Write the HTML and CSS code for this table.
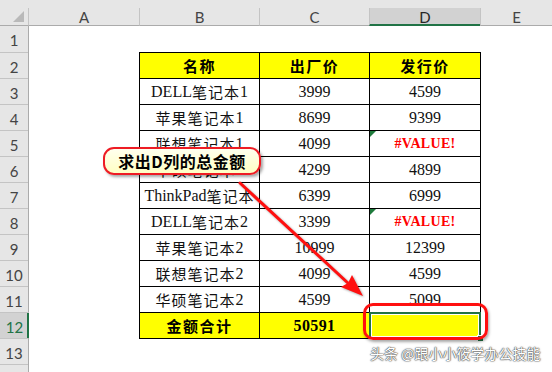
FILE: index.html
```html
<!DOCTYPE html>
<html lang="zh-CN">
<head>
<meta charset="utf-8">
<title>求出D列的总金额</title>
<link rel="stylesheet" href="styles.css">
</head>
<body>
<div class="app">
  <div class="topstrip"></div>
  <div class="colbar">
    <div class="corner"><span class="tri"></span></div>
    <div class="ch w-a">A</div>
    <div class="ch w-b">B</div>
    <div class="ch w-c">C</div>
    <div class="ch w-d sel">D</div>
    <div class="ch w-e">E</div>
  </div>
  <div class="main">
    <div class="rowhdrs">
      <div class="rh">1</div>
      <div class="rh">2</div>
      <div class="rh">3</div>
      <div class="rh">4</div>
      <div class="rh">5</div>
      <div class="rh">6</div>
      <div class="rh">7</div>
      <div class="rh">8</div>
      <div class="rh">9</div>
      <div class="rh">10</div>
      <div class="rh">11</div>
      <div class="rh sel">12</div>
      <div class="rh">13</div>
      <div class="rh"></div>
    </div>
    <div class="cells">
      <div class="tbl">
        <div class="c hd">名称</div>
        <div class="c hd">出厂价</div>
        <div class="c hd">发行价</div>

        <div class="c">DELL<span class="zh">笔记本</span>1</div>
        <div class="c">3999</div>
        <div class="c">4599</div>

        <div class="c"><span class="zh">苹果笔记本</span>1</div>
        <div class="c">8699</div>
        <div class="c">9399</div>

        <div class="c"><span class="zh">联想笔记本</span>1</div>
        <div class="c">4099</div>
        <div class="c err">#VALUE!</div>

        <div class="c"><span class="zh">华硕笔记本</span>1</div>
        <div class="c">4299</div>
        <div class="c">4899</div>

        <div class="c">ThinkPad<span class="zh">笔记本</span></div>
        <div class="c">6399</div>
        <div class="c">6999</div>

        <div class="c">DELL<span class="zh">笔记本</span>2</div>
        <div class="c">3399</div>
        <div class="c err">#VALUE!</div>

        <div class="c"><span class="zh">苹果笔记本</span>2</div>
        <div class="c">10999</div>
        <div class="c">12399</div>

        <div class="c"><span class="zh">联想笔记本</span>2</div>
        <div class="c">4099</div>
        <div class="c">4599</div>

        <div class="c"><span class="zh">华硕笔记本</span>2</div>
        <div class="c">4599</div>
        <div class="c">5099</div>

        <div class="c hd">金额合计</div>
        <div class="c hd num">50591</div>
        <div class="c hd active"><span class="handle"></span></div>
      </div>
    </div>
  </div>

  <div class="callout">求出D列的总金额</div>
  <svg class="arrow" width="552" height="372" viewBox="0 0 552 372">
    <line x1="240" y1="183" x2="349" y2="284" stroke="#ff1010" stroke-width="3" stroke-linecap="round"/>
    <polygon points="363,296 341,287 348,283 352,275" fill="#ff1010"/>
  </svg>
  <div class="ring"></div>
  <div class="watermark">头条 @跟小小筱学办公技能</div>
</div>
</body>
</html>
```
FILE: styles.css
```css
html, body {
  margin: 0;
  padding: 0;
  background: #fff;
}

.app {
  position: relative;
  width: 552px;
  height: 372px;
  overflow: hidden;
  display: flex;
  flex-direction: column;
  font-family: "Lato", "Liberation Sans", sans-serif;
}

.topstrip {
  height: 8px;
  background: #e6e6e6;
  flex: none;
}

.colbar {
  display: flex;
  height: 18px;
  flex: none;
  background: #e6e6e6;
}

.corner {
  width: 28px;
  flex: none;
  position: relative;
  border-bottom: 1px solid #ababab;
  box-sizing: border-box;
}

.tri {
  position: absolute;
  right: 4px;
  bottom: 3px;
  width: 0;
  height: 0;
  border-left: 11px solid transparent;
  border-bottom: 11px solid #b9b9b9;
}

.ch {
  box-sizing: border-box;
  border-left: 1px solid #c4c4c4;
  border-bottom: 1px solid #ababab;
  display: flex;
  align-items: center;
  justify-content: center;
  font-size: 15px;
  color: #444;
  flex: none;
}

.w-a { width: 111px; }
.w-b { width: 120px; }
.w-c { width: 110px; }
.w-d { width: 111px; }
.w-e { flex: 1; }

.ch.sel {
  background: #d2d2d2;
  border-bottom: 2px solid #217346;
  color: #262626;
  padding-top: 1px;
}

.main {
  flex: 1;
  display: flex;
}

.rowhdrs {
  width: 29px;
  flex: none;
  box-sizing: border-box;
  background: #e6e6e6;
  border-right: 1px solid #ababab;
  display: flex;
  flex-direction: column;
}

.rh {
  height: 26px;
  flex: none;
  box-sizing: border-box;
  display: flex;
  align-items: center;
  justify-content: center;
  font-size: 15px;
  color: #444;
  padding-top: 2px;
}

.rh + .rh {
  border-top: 1px solid #c4c4c4;
}

.rh.sel {
  background: #d2d2d2;
  color: #217346;
  box-shadow: inset -2px 0 0 #217346;
  margin-right: -1px;
}

.cells {
  flex: 1;
  background: #fff;
  padding: 26px 0 0 110px;
}

.tbl {
  display: grid;
  grid-template-columns: 119px 109px 110px;
  grid-template-rows: repeat(11, 25px);
  gap: 1px;
  padding: 1px;
  background: #000;
  width: max-content;
}

.c {
  position: relative;
  background: #fff;
  display: flex;
  align-items: center;
  justify-content: center;
  font-family: "Liberation Serif", "Noto Sans CJK SC", serif;
  font-size: 16px;
  color: #111;
  white-space: nowrap;
}

.zh {
  font-family: "Noto Sans CJK SC", sans-serif;
  font-size: 15px;
  letter-spacing: 1px;
  font-weight: 400;
}

.c.hd {
  background: #ffff00;
  font-family: "Noto Sans CJK SC", sans-serif;
  font-weight: 700;
  font-size: 15px;
  letter-spacing: 1.5px;
  color: #000;
}

.c.hd.num {
  font-family: "Liberation Serif", serif;
  font-size: 16px;
  letter-spacing: 0.4px;
}

.c.err {
  color: #ff0000;
  font-weight: 700;
  font-size: 14px;
  letter-spacing: 0.3px;
}

.c.err::before {
  content: "";
  position: absolute;
  left: 0;
  top: 0;
  width: 0;
  height: 0;
  border-top: 6px solid #1e7b3c;
  border-right: 6px solid transparent;
}

.c.active {
  box-shadow: 0 0 0 1px #217346, inset 0 0 0 1px #217346, inset 0 0 0 2px #ffffff;
}

.handle {
  position: absolute;
  right: -4px;
  bottom: -4px;
  width: 5px;
  height: 5px;
  background: #217346;
  border: 1px solid #fff;
}

.callout {
  position: absolute;
  left: 103px;
  top: 147px;
  width: 158px;
  height: 28px;
  box-sizing: border-box;
  border: 2px solid #ee1c24;
  border-radius: 11px;
  background: linear-gradient(#ffffee, #ffffc4);
  box-shadow: 2px 2px 3px rgba(0, 0, 0, 0.35);
  display: flex;
  align-items: center;
  justify-content: center;
  font-family: "Noto Sans CJK SC", sans-serif;
  font-weight: 700;
  font-size: 16px;
  color: #000;
  letter-spacing: 0.5px;
}

.arrow {
  position: absolute;
  left: 0;
  top: 0;
  pointer-events: none;
  filter: drop-shadow(1px 1px 1px rgba(0, 0, 0, 0.35));
}

.ring {
  position: absolute;
  left: 363px;
  top: 303px;
  width: 125px;
  height: 37px;
  box-sizing: border-box;
  border: 3px solid #ff1010;
  border-radius: 10px;
  box-shadow: 1px 2px 3px rgba(0, 0, 0, 0.35);
}

.watermark {
  position: absolute;
  left: 370px;
  top: 343px;
  font-family: "Noto Sans CJK SC", sans-serif;
  font-size: 14px;
  color: #ffffff;
  white-space: nowrap;
  text-shadow: 0 0 1px #444, 0 0 1px #444, 0 0 2px #666;
}
```
